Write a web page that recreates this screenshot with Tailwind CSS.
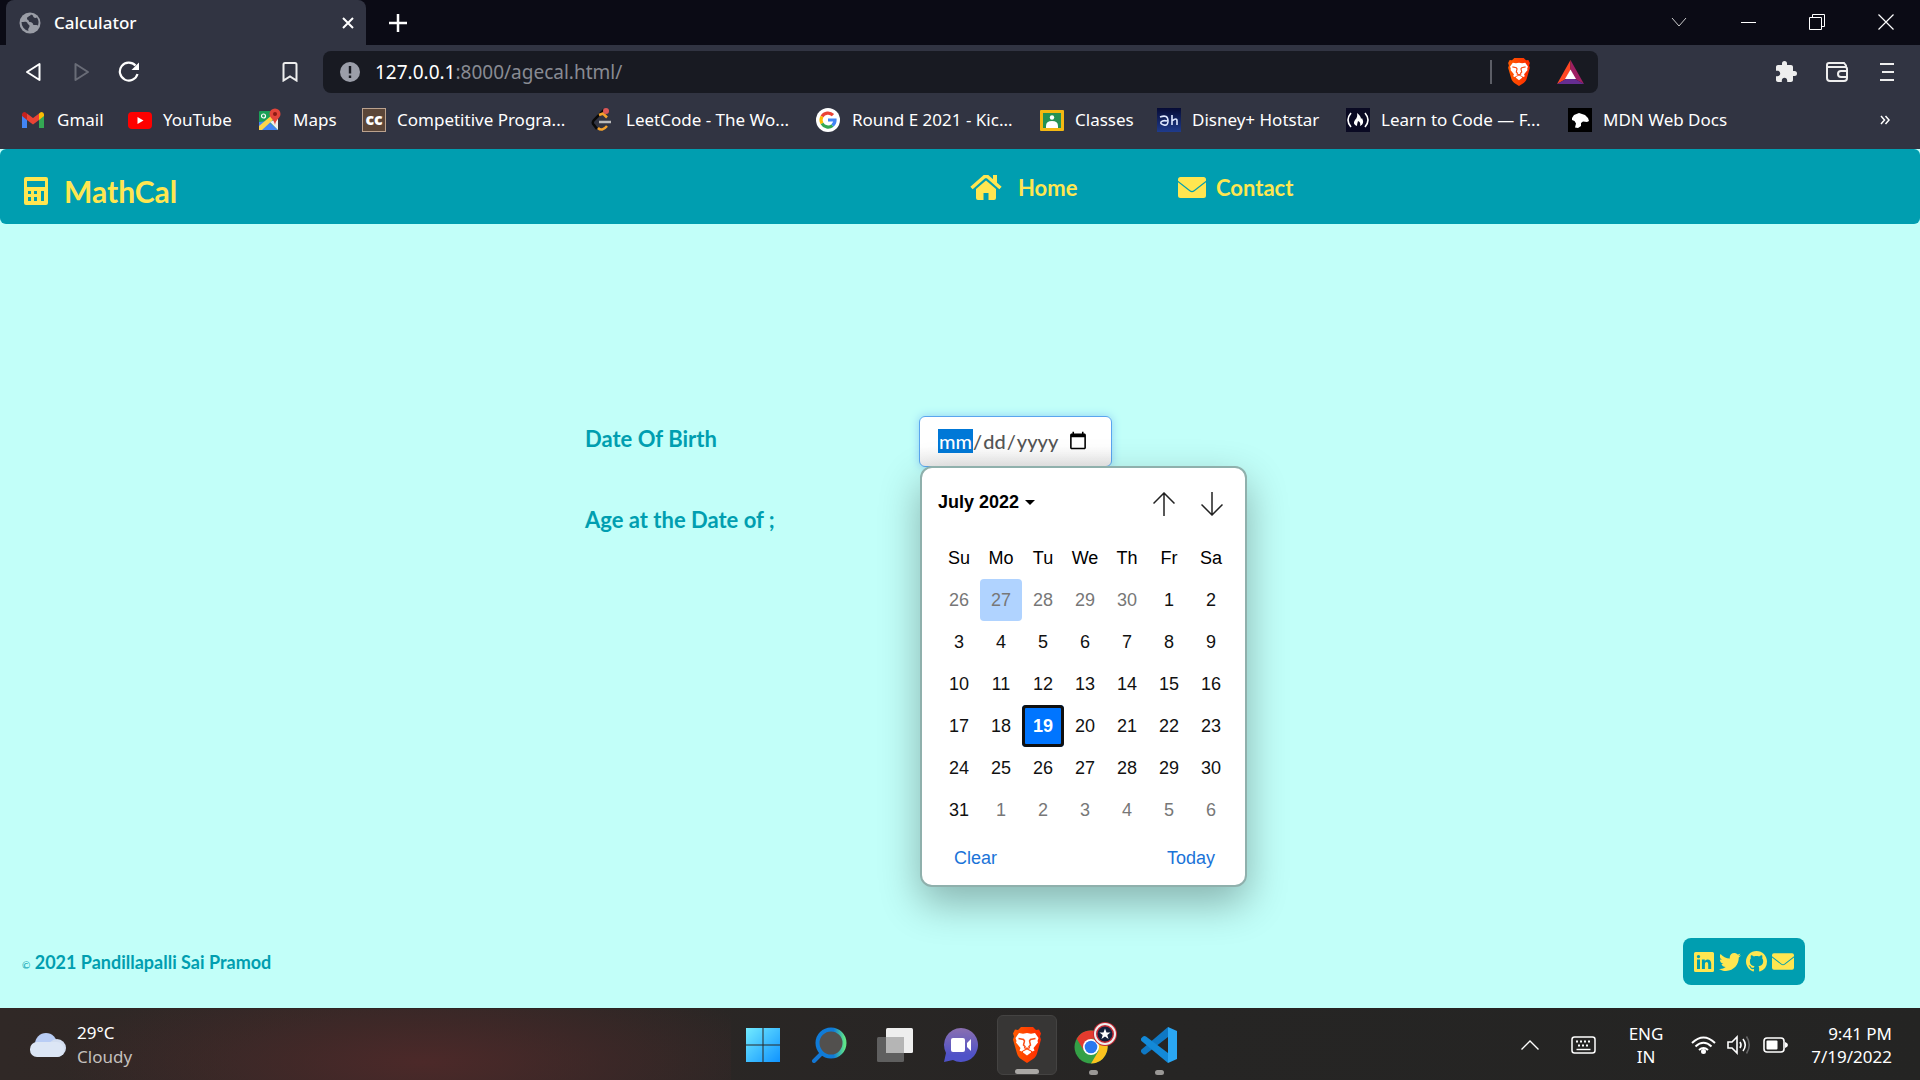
<!DOCTYPE html>
<html lang="en">
<head>
<meta charset="utf-8">
<title>Calculator</title>
<script src="https://cdn.jsdelivr.net/npm/@tailwindcss/browser@4"></script>
</head>
<body class="flex min-h-screen flex-col overflow-x-hidden bg-[#c2fff9] font-['Noto_Sans','Open_Sans',sans-serif]">

<!-- symbols shared by several places -->
<svg class="absolute size-0" aria-hidden="true">
  <linearGradient id="lion"><stop offset="0" stop-color="#ff5a00"/><stop offset="1" stop-color="#ff2a00"/></linearGradient>
  <symbol id="brave" viewBox="0 0 30 36">
    <path d="M9 0h12l3 3 3-.5 2 4-1 3 1 3-4 14c-1 3-2 4-4 5.500l-6 4-6-4c-2-1.500-3-2.500-4-5.500L1 12.500l1-3-1-3 2-4L6 3z" fill="url(#lion)"/>
    <path d="M7 6l4 .8 4-.8 4 .8 4-.8 3.500 5-1 3 .5 1.500-4.500 5.500 1 2.500-2 1-3-2-2.500-1-2.500 1-3 2-2-1 1-2.500L4 15.500l.5-1.500-1-3z" fill="#fff"/>
    <path d="M11 24.500l4-2 4 2v1l-4 3-4-3z" fill="#fff"/>
    <path d="M6.500 11.500l5 1 1 1.500-1 4 2 2M23.500 11.500l-5 1-1 1.500 1 4-2 2M12 20.500l3 1 3-1" fill="none" stroke="#fb4c15" stroke-width="1.500"/>
  </symbol>
  <symbol id="mail" viewBox="0 0 28 21">
    <path d="M2.500 0h23A2.500 2.500 0 0 1 28 2.500v1.300l-12.200 9.500q-1.800 1.400-3.600 0L0 3.800V2.500A2.500 2.500 0 0 1 2.500 0zM0 5.300l11.500 9q2.500 1.800 5 0L28 5.300v13.200a2.500 2.500 0 0 1-2.500 2.500h-23A2.500 2.500 0 0 1 0 18.500z" fill="currentColor"/>
  </symbol>
</svg>

<!-- tab strip -->
<div class="flex h-[45px] items-stretch bg-[#0b0b15] pl-[6px] text-white">
  <div class="flex w-[360px] items-center rounded-t-lg bg-[#313442] pr-[9px] pl-[13px]">
    <svg class="size-[22px]" viewBox="0 0 22 22"><circle cx="11" cy="11" r="10.500" fill="#9a9da6"/><path d="M12 2.500c-1 2-4 2-4 4s2 1 2 3c0 1 4 0 4 3 1 1 3 0 5 1a9 9 0 0 0-1-8c-2 1-4 0-4-2zM2.500 10c2 0 5-1 6 1 0 2 2 1 2 3s-2 2-1 5a9 9 0 0 1-7-9z" fill="#313442"/></svg>
    <span class="ml-[13px] text-[17px] leading-6 font-medium">Calculator</span>
    <button class="ml-auto p-[3px]" aria-label="Close tab"><svg class="size-3" viewBox="0 0 12 12"><path d="M1 1l10 10M11 1L1 11" stroke="#fff" stroke-width="2"/></svg></button>
  </div>
  <button class="ml-[20px] px-[3px]" aria-label="New tab"><svg class="size-[18px]" viewBox="0 0 18 18"><path d="M9 0v18M0 9h18" stroke="#fff" stroke-width="2.500"/></svg></button>
  <div class="ml-auto flex items-center pb-px">
    <button class="flex w-[69px] justify-center" aria-label="Search tabs"><svg class="size-4" viewBox="0 0 16 16"><path d="M1 4l7 8 7-8" fill="none" stroke="#ccc"/></svg></button>
    <button class="flex w-[69px] justify-center" aria-label="Minimize"><svg class="size-4" viewBox="0 0 16 16"><path d="M1 8.500h15" stroke="#fff"/></svg></button>
    <button class="flex w-[69px] justify-center" aria-label="Restore"><svg class="size-4" viewBox="0 0 16 16"><path d="M.5 3.500h12v12H.5zM3.500 3V.5h12v12H13" fill="none" stroke="#fff"/></svg></button>
    <button class="flex w-[69px] justify-center" aria-label="Close"><svg class="size-4" viewBox="0 0 16 16"><path d="M.5.5l15 15M15.500.5l-15 15" stroke="#fff" stroke-width="1.200"/></svg></button>
  </div>
</div>

<!-- toolbar -->
<div class="flex h-[54px] items-center bg-[#313442] pr-[25px] pl-[24px] text-[#eee]">
  <button class="mr-[28px]" aria-label="Back"><svg class="size-5" viewBox="0 0 20 20"><path d="M15.500 2v16L3 10z" fill="none" stroke="#fff" stroke-width="2" stroke-linejoin="round"/></svg></button>
  <button class="mr-[26px]" aria-label="Forward"><svg class="size-5" viewBox="0 0 20 20"><path d="M3.500 2v16L16 10z" fill="none" stroke="#696c77" stroke-width="2" stroke-linejoin="round"/></svg></button>
  <button class="mr-[142px]" aria-label="Reload"><svg class="size-[22px]" viewBox="0 0 22 22"><path d="M17.500 4.500A9 9 0 1 0 19.500 13" fill="none" stroke="#fff" stroke-width="2.200"/><path d="M21 1.500v7.500h-7.500z" fill="#fff"/></svg></button>
  <button class="mr-[25px]" aria-label="Bookmark"><svg class="h-5 w-4" viewBox="0 0 16 20"><path d="M1.500 2.500q0-1.500 1.500-1.500h10q1.500 0 1.500 1.500V18.500L8 14.500l-6.500 4z" fill="none" stroke="#eee" stroke-width="2"/></svg></button>
  <div class="flex h-[42px] w-[1275px] items-center rounded-lg bg-[#181a22] pr-[14px] pl-[17px]">
    <svg class="size-5" viewBox="0 0 20 20"><circle cx="10" cy="10" r="10" fill="#9b9ea9"/><path d="M10 4v7.500M10 13.500V16" stroke="#181a22" stroke-width="2.400"/></svg>
    <span class="ml-[15px] text-[19px] leading-7 text-[#888b93]"><span class="text-white">127.0.0.1</span>:8000/agecal.html/</span>
    <span class="ml-auto h-6 w-[2px] bg-[#5c5e66]"></span>
    <svg class="ml-[15px] h-7 w-6"><use href="#brave"/></svg>
    <svg class="ml-[26px] h-6 w-[27px]" viewBox="0 0 27 24"><path d="M13.500 0L0 24l9-5 4.500-9z" fill="#ff4724"/><path d="M13.500 0L27 24l-9-5-4.500-9z" fill="#9e1f63"/><path d="M0 24h27l-9-5H9z" fill="#662d91"/><path d="M13.500 9.500L19 19H8z" fill="#fff"/></svg>
  </div>
  <button class="ml-auto" aria-label="Extensions"><svg class="size-6" viewBox="0 0 24 24"><path d="M20.500 11H19V7c0-1.100-.9-2-2-2h-4V3.500a2.500 2.500 0 0 0-5 0V5H4c-1.100 0-2 .9-2 2v3.800h1.500c1.490 0 2.700 1.210 2.700 2.700s-1.210 2.700-2.700 2.700H2V20c0 1.100.9 2 2 2h3.800v-1.500c0-1.490 1.210-2.700 2.700-2.700s2.700 1.210 2.700 2.700V22H17c1.100 0 2-.9 2-2v-4h1.500a2.500 2.500 0 0 0 0-5z" fill="#eee"/></svg></button>
  <button class="ml-[27px]" aria-label="Wallet"><svg class="size-6" viewBox="0 0 24 24"><path d="M21 7V5.500L19 3H4Q2 3 2 5v13q0 3 3 3h14q3 0 3-3V9q0-2-2-2H2M22 11h-6q-3 0-3 3t3 3h6" fill="none" stroke="#eee" stroke-width="2"/></svg></button>
  <button class="ml-[30px]" aria-label="Menu"><svg class="h-5 w-4" viewBox="0 0 16 20"><path d="M1 2h14M3 10h12M1 18h14" stroke="#eee" stroke-width="2.200"/></svg></button>
</div>

<!-- bookmarks -->
<nav class="flex h-[50px] items-center bg-[#313442] pr-[30px] pb-[8px] pl-[21px] text-[17px] leading-6 whitespace-nowrap text-white">
  <a href="#" class="flex w-[107px] items-center gap-3"><svg class="size-6" viewBox="0 0 24 24"><path d="M1 6v14h5V10z" fill="#4285f4"/><path d="M23 6v14h-5V10z" fill="#34a853"/><path d="M18 5.500l2-1.500q3 0 3 3v1l-5 4z" fill="#fbbc04"/><path d="M1 7q0-3 3-3l2 1.500V12L1 8z" fill="#c5221f"/><path d="M6 5.500l6 4.500 6-4.500V12l-6 4.500L6 12z" fill="#ea4335"/></svg>Gmail</a>
  <a href="#" class="flex w-[130px] items-center gap-[11px]"><svg class="size-6" viewBox="0 0 24 24"><rect y="4" width="24" height="17" rx="4" fill="#f00"/><path d="M9.500 9v7l6-3.500z" fill="#fff"/></svg>YouTube</a>
  <a href="#" class="flex w-[104px] items-center gap-[11px]"><svg class="size-6" viewBox="0 0 24 24"><rect x="1" y="3" width="19" height="19" rx="1" fill="#1a9f57"/><path d="M1 22V14l9-1 10 9z" fill="#4285f4"/><path d="M1 22V18L14 7l3 3L4 22z" fill="#fdd54a"/><path d="M20 10v12L12 14z" fill="#eee"/><circle cx="5.500" cy="8" r="2" fill="none" stroke="#fff" stroke-width="1.200"/><path d="M11.500 6a5.500 5.500 0 0 1 11 0c0 4-4.500 5-5.500 11-1-6-5.500-7-5.500-11z" fill="#e2453a"/><circle cx="17" cy="6" r="2" fill="#8c1b14"/></svg>Maps</a>
  <a href="#" class="flex w-[228px] items-center gap-[11px]"><span class="flex size-6 items-center justify-center border border-[#bba28e] bg-[#5b4638] pb-[2px] text-base font-black text-white">cc</span>Competitive Progra...</a>
  <a href="#" class="flex w-[226px] items-center gap-3"><svg class="size-6" viewBox="0 0 24 24"><path d="M14 2L4 12q-2.500 3 0 5l3 4" fill="none" stroke="#090909" stroke-width="2.500"/><path d="M9 7l4-1.500 4 4M8 20q4 4 9-2" fill="none" stroke="#f5a22b" stroke-width="2.500"/><path d="M9 14h12" stroke="#bbb" stroke-width="2.500"/><circle cx="16" cy="3" r="3" fill="#dc5757"/></svg>LeetCode - The Wo...</a>
  <a href="#" class="flex w-[224px] items-center gap-3"><svg class="size-6" viewBox="0 0 24 24"><circle cx="12" cy="12" r="12" fill="#fff"/><g fill="none" stroke-width="3.200"><path d="M17 7.200A7 7 0 0 0 6 8.500" stroke="#ea4335"/><path d="M6 8.500a7 7 0 0 0 0 7" stroke="#fbbc05"/><path d="M6 15.500a7 7 0 0 0 10.500 2" stroke="#34a853"/><path d="M12 12h7a7 7 0 0 1-2.500 5.500" stroke="#4285f4"/></g></svg>Round E 2021 - Kic...</a>
  <a href="#" class="flex w-[117px] items-center gap-[11px]"><svg class="size-6" viewBox="0 0 24 24"><rect y="2" width="24" height="21" rx="1" fill="#f4b812"/><rect x="3" y="5" width="18" height="15" fill="#259153"/><circle cx="12" cy="9.500" r="2.200" fill="#fff"/><path d="M6 18q0-5 6-5t6 5v2H6z" fill="#fff"/></svg>Classes</a>
  <a href="#" class="flex w-[189px] items-center gap-[11px]"><svg class="size-6" viewBox="0 0 24 24"><rect width="24" height="24" fill="url(#dis)"/><path d="M3 9q8-3 8 4 0 5-4 4-4-1-3-3 2-2 6-1M15 7v10M15 13q5-4 5 0v4" fill="none" stroke="#dfe8ff" stroke-width="1.600"/><linearGradient id="dis" x2="0" y2="1"><stop stop-color="#060b35"/><stop offset="1" stop-color="#1f3b8c"/></linearGradient></svg>Disney+ Hotstar</a>
  <a href="#" class="flex w-[222px] items-center gap-[11px]"><svg class="size-6" viewBox="0 0 24 24"><rect width="24" height="24" fill="#0a0a23"/><path d="M5 5q-6 7 0 14M19 5q6 7 0 14" fill="none" stroke="#fff" stroke-width="1.600"/><path d="M11 5q4 3 4 6l1-1q3 6-2 8 1-4-2-5-1 3-1 5-5-2-2-6 3-3 2-7z" fill="#fff"/></svg>Learn to Code — F...</a>
  <a href="#" class="flex items-center gap-[11px]"><svg class="size-6" viewBox="0 0 24 24"><rect width="24" height="24" fill="#000"/><path d="M4 10l2-3 5-2 6 2 3 3 1 3-2 1-4-.5-2 1.500v3l-3 2-3-.5 1-4-1.500-2.500L4 12z" fill="#fff"/></svg>MDN Web Docs</a>
  <button class="ml-auto" aria-label="More bookmarks"><svg class="size-[10px]" viewBox="0 0 10 10"><path d="M1 1l3.500 4L1 9M5.500 1L9 5 5.500 9" fill="none" stroke="#fff" stroke-width="1.500"/></svg></button>
</nav>

<!-- web page -->
<main class="flex flex-1 flex-col font-['Lato',sans-serif]">
  <header class="flex h-[75px] items-center rounded-md bg-[#009eb0] pl-6 font-bold text-[#ffe650]">
    <a href="#" class="flex w-[946px] items-center gap-4 pt-[8px] text-[30px] leading-8">
      <svg class="h-7 w-6" viewBox="0 0 24 28"><path fill-rule="evenodd" d="M2 0h20q2 0 2 2v24q0 2-2 2H2q-2 0-2-2V2q0-2 2-2zM3 4v6h18V4zM4 14v3h3v-3zM10 14v3h3v-3zM17 14v10h3V14zM4 20v4h3v-4zM10 20v4h3v-4z" fill="currentColor"/></svg>MathCal</a>
    <a href="#" class="flex w-[208px] items-center gap-4 pt-[2px] text-[22px] leading-8">
      <svg class="h-[25px] w-8" viewBox="0 0 32 25"><path d="M16 5.500l10 8.500v9q0 2-2 2h-5.500v-7h-5v7H8q-2 0-2-2v-9z" fill="currentColor"/><path d="M1.500 13L14 2q2-1.500 4 0l12.500 11" fill="none" stroke="#009eb0" stroke-width="6"/><path d="M1.500 13L14 2q2-1.500 4 0l12.500 11" fill="none" stroke="currentColor" stroke-width="3.500"/><path d="M23 0h4v10l-4-3.500z" fill="currentColor"/></svg>Home</a>
    <a href="#" class="flex items-center gap-[10px] pt-[2px] text-[22px] leading-8"><svg class="h-[21px] w-7"><use href="#mail"/></svg>Contact</a>
  </header>

  <form class="mx-auto mt-[192px] grid w-[750px] grid-cols-[334px_1fr] items-start text-[22px] font-bold text-[#009eb0]">
    <label for="dob" class="pt-[7px] leading-8">Date Of Birth</label>
    <div class="relative h-[81px]">
      <input id="dob" type="date" class="h-[51px] w-[193px] rounded-md border border-[#5aa5ee] bg-linear-to-b from-white from-60% to-[#ebebeb] pr-[21px] pb-[2px] pl-[18px] text-xl font-medium text-[#555] shadow-[0_0_10px_#8fd0f5] outline-none [&::-webkit-datetime-edit-fields-wrapper]:p-0 [&::-webkit-datetime-edit-month-field]:rounded-none [&::-webkit-datetime-edit-month-field]:bg-[#0078d7] [&::-webkit-datetime-edit-month-field]:text-white">
      <section class="absolute top-[50px] left-px z-10 w-[327px] rounded-xl border-2 border-[#8fb0ac] bg-white pr-[15px] pl-4 pt-[13px] font-['Liberation_Sans',sans-serif] text-lg font-normal text-black shadow-[0_16px_40px_rgba(0,0,0,0.3)]">
        <div class="flex h-[44px] items-center justify-between">
          <button type="button" class="flex items-center gap-[6px] pb-[2px] font-bold">July 2022 <svg class="h-[5px] w-[10px]" viewBox="0 0 10 5"><path d="M0 0h10L5 5z"/></svg></button>
          <div class="flex gap-[26px] pt-px pr-[7px]">
            <button type="button" aria-label="Previous month"><svg class="h-6 w-[22px]" viewBox="0 0 22 24" fill="none" stroke="#222" stroke-width="1.500"><path d="M11 24V1M.5 11.500L11 1l10.500 10.500"/></svg></button>
            <button type="button" aria-label="Next month"><svg class="h-6 w-[22px]" viewBox="0 0 22 24" fill="none" stroke="#222" stroke-width="1.500"><path d="M11 0v23M.5 12.500L11 23l10.500-10.500"/></svg></button>
          </div>
        </div>
        <table class="mt-[11px] w-[294px] table-fixed text-center [&_td]:h-[42px] [&_th]:h-[43px] [&_th]:font-normal">
          <thead><tr><th>Su</th><th>Mo</th><th>Tu</th><th>We</th><th>Th</th><th>Fr</th><th>Sa</th></tr></thead>
          <tbody class="text-[#111]">
            <tr><td class="text-[#777]">26</td><td class="rounded-sm bg-[#b0d3ff] text-[#777]">27</td><td class="text-[#777]">28</td><td class="text-[#777]">29</td><td class="text-[#777]">30</td><td>1</td><td>2</td></tr>
            <tr><td>3</td><td>4</td><td>5</td><td>6</td><td>7</td><td>8</td><td>9</td></tr>
            <tr><td>10</td><td>11</td><td>12</td><td>13</td><td>14</td><td>15</td><td>16</td></tr>
            <tr><td>17</td><td>18</td><td class="rounded-sm bg-[#0075ff] font-bold text-white inset-ring-3 inset-ring-[#101010]">19</td><td>20</td><td>21</td><td>22</td><td>23</td></tr>
            <tr><td>24</td><td>25</td><td>26</td><td>27</td><td>28</td><td>29</td><td>30</td></tr>
            <tr><td>31</td><td class="text-[#777]">1</td><td class="text-[#777]">2</td><td class="text-[#777]">3</td><td class="text-[#777]">4</td><td class="text-[#777]">5</td><td class="text-[#777]">6</td></tr>
          </tbody>
        </table>
        <div class="flex h-[54px] items-center justify-between pr-[15px] pb-px pl-[16px] text-[#1a73d8]">
          <button type="button">Clear</button><button type="button">Today</button>
        </div>
      </section>
    </div>
    <span class="pt-[7px] leading-8">Age at the Date of ;</span>
  </form>

  <footer class="mt-auto flex items-center justify-between pr-[115px] pb-[23px] pl-[22px]">
    <p class="text-lg font-bold text-[#009eb0]"><span class="text-[10px] font-normal">©</span> 2021 Pandillapalli Sai Pramod</p>
    <div class="flex h-[47px] items-center gap-[5px] rounded-lg bg-[#009eb0] px-[11px] text-[#ffe650]">
      <a href="#" aria-label="LinkedIn"><svg class="size-5" viewBox="0 0 20 20"><path fill-rule="evenodd" d="M1.500 0h17Q20 0 20 1.500v17q0 1.500-1.500 1.500h-17Q0 20 0 18.500v-17Q0 0 1.500 0zM3 7.600v9.500h3V7.600zM4.500 2.900a1.700 1.700 0 1 0 0 3.400 1.700 1.700 0 0 0 0-3.400zM7.900 7.600v9.500h3v-4.700c0-3 3.300-3.300 3.300 0v4.700h3v-5.300c0-5-4.500-5.300-6.400-2.900V7.600z" fill="currentColor"/></svg></a>
      <a href="#" aria-label="Twitter"><svg class="size-[22px]" viewBox="0 0 512 512"><path d="M459.370 151.716c.325 4.548.325 9.097.325 13.645 0 138.720-105.583 298.558-298.558 298.558-59.452 0-114.680-17.219-161.137-47.106 8.447.974 16.568 1.299 25.340 1.299 49.055 0 94.213-16.568 130.274-44.832-46.132-.975-84.792-31.188-98.112-72.772 6.498.974 12.995 1.624 19.818 1.624 9.421 0 18.843-1.300 27.614-3.573-48.081-9.747-84.143-51.980-84.143-102.985v-1.299c13.969 7.797 30.214 12.670 47.431 13.319-28.264-18.843-46.781-51.005-46.781-87.391 0-19.492 5.197-37.360 14.294-52.954 51.655 63.675 129.300 105.258 216.365 109.807-1.624-7.797-2.599-15.918-2.599-24.040 0-57.828 46.782-104.934 104.934-104.934 30.213 0 57.502 12.670 76.670 33.137 23.715-4.548 46.456-13.320 66.599-25.340-7.798 24.366-24.366 44.833-46.132 57.827 21.117-2.273 41.584-8.122 60.426-16.243-14.292 20.791-32.161 39.308-52.628 54.253z" fill="currentColor"/></svg></a>
      <a href="#" aria-label="GitHub"><svg class="size-[21px]" viewBox="0 0 16 16"><path d="M8 0C3.580 0 0 3.580 0 8c0 3.540 2.290 6.530 5.470 7.590.4.070.55-.17.55-.38 0-.19-.01-.82-.01-1.490-2.010.37-2.530-.49-2.690-.94-.09-.23-.48-.94-.82-1.130-.28-.15-.68-.52-.01-.53.63-.01 1.080.58 1.230.82.72 1.210 1.870.87 2.330.66.070-.52.28-.87.51-1.070-1.780-.2-3.640-.89-3.640-3.950 0-.87.31-1.590.82-2.150-.08-.2-.36-1.020.08-2.120 0 0 .67-.21 2.200.82.64-.18 1.320-.27 2-.27s1.360.09 2 .27c1.530-1.040 2.200-.82 2.200-.82.44 1.100.16 1.920.08 2.120.51.56.82 1.270.82 2.150 0 3.070-1.870 3.750-3.650 3.950.29.25.54.73.54 1.480v2.200c0 .21.15.46.55.38A8 8 0 0 0 16 8c0-4.420-3.580-8-8-8z" fill="currentColor"/></svg></a>
      <a href="#" aria-label="Email"><svg class="h-[17px] w-[22px]"><use href="#mail"/></svg></a>
    </div>
  </footer>
</main>

<!-- taskbar -->
<div class="grid h-[72px] grid-cols-[1fr_auto_1fr] items-center bg-linear-to-r from-[#302826] via-[#262524] via-60% to-[#242423] pt-px text-white">
  <div class="flex h-full items-center gap-[11px] bg-radial-[ellipse_50%_130%_at_58%_75%] from-[#4c2929] to-transparent pl-[29px]">
    <svg class="h-6 w-[37px]" viewBox="0 0 37 24"><circle cx="17" cy="11" r="11" fill="#b9cdf5"/><circle cx="28" cy="15" r="9" fill="#d3def0"/><rect x="1" y="9" width="34" height="15" rx="7" fill="#dce6f5"/></svg>
    <div class="text-[17px] leading-6"><p>29°C</p><p class="text-[#c4c0be]">Cloudy</p></div>
  </div>
  <div class="flex items-center gap-[6px] pl-[2px] [&>button]:relative [&>button]:flex [&>button]:size-[60px] [&>button]:items-center [&>button]:justify-center">
    <button aria-label="Start"><svg class="size-9" viewBox="0 0 36 36"><g fill="url(#win)"><path d="M1 1h16.500v16.500H1zM18.500 1H35v16.500H18.500zM1 18.500h16.500V35H1zM18.500 18.500H35V35H18.500z"/></g><linearGradient id="win" x2="1" y2="1"><stop stop-color="#72ebff"/><stop offset="1" stop-color="#0f93ff"/></linearGradient></svg></button>
    <button aria-label="Search"><svg class="size-9" viewBox="0 0 36 36"><path d="M3 34L12 25" stroke="#1377d4" stroke-width="4" stroke-linecap="round"/><circle cx="20" cy="16" r="13.500" fill="#52504e" stroke="url(#sr)" stroke-width="4"/><linearGradient id="sr"><stop offset=".6" stop-color="#0f7bd8"/><stop offset="1" stop-color="#5fe588"/></linearGradient></svg></button>
    <button aria-label="Task view"><svg class="size-9" viewBox="0 0 36 36"><rect y="10" width="27" height="25" rx="1.500" fill="#5f5f5f"/><rect x="9" y="1" width="27" height="25" rx="1.500" fill="#eee"/><path d="M9 10h18v16H9z" fill="#b5b5b5"/></svg></button>
    <button aria-label="Chat"><svg class="size-9" viewBox="0 0 36 36"><path d="M18 1a17 17 0 1 1-8 32l-9 2 2-9A17 17 0 0 1 18 1z" fill="url(#ch)"/><rect x="8" y="11" width="14" height="14" rx="2" fill="#fff"/><path d="M24 16l4-4v12l-4-4z" fill="#fff"/><linearGradient id="ch" x2="0" y2="1"><stop stop-color="#8a6fb0"/><stop offset=".8" stop-color="#4f52c8"/></linearGradient></svg></button>
    <button aria-label="Brave" class="rounded-md border border-[#444342] bg-[#373635]"><svg class="h-9 w-[30px]"><use href="#brave"/></svg><span class="absolute bottom-0 h-[5px] w-6 rounded-full bg-[#aaa8a5]"></span></button>
    <button aria-label="Chrome"><svg class="size-12" viewBox="0 0 48 48"><circle cx="22" cy="26" r="16.500" fill="#34a046"/><path d="M7.700 17.700A16.500 16.500 0 0 1 36.300 17.700H22v8l-7 4z" fill="#e33b2e"/><path d="M36.300 17.700A16.500 16.500 0 0 1 22 42.500L29.500 30 28 17.700z" fill="#fcc31e"/><circle cx="22" cy="26" r="8" fill="#fff"/><circle cx="22" cy="26" r="6.300" fill="#2a77ee"/><circle cx="36" cy="13" r="12" fill="#c52b35"/><circle cx="36" cy="13" r="10" fill="none" stroke="#eee" stroke-width="2"/><circle cx="36" cy="13" r="7.500" fill="#14203a"/><path d="M36 7.500l1.500 4h4l-3.200 2.500 1.200 4-3.500-2.500-3.500 2.500 1.200-4-3.200-2.500h4z" fill="#fff"/></svg><span class="absolute bottom-0 h-[5px] w-[9px] rounded-full bg-[#9a9896]"></span></button>
    <button aria-label="Visual Studio Code"><svg class="size-9" viewBox="0 0 36 36"><path d="M27 0v10L5 27q-1.500 1-3 0L.5 25.500q-1.500-1.500 0-3z" fill="#0f78c4"/><path d="M27 36V26L5 9.500q-1.500-1-3 0L.5 11q-1.500 1.500 0 3z" fill="#1389d8"/><path d="M27 0l9 4v28l-9 4z" fill="#2aa7f4"/></svg><span class="absolute bottom-0 h-[5px] w-[9px] rounded-full bg-[#9a9896]"></span></button>
  </div>
  <div class="flex items-center justify-end pr-[28px] text-center text-[17px] leading-[23px]">
    <button aria-label="Hidden icons"><svg class="h-[10px] w-[18px]" viewBox="0 0 18 10"><path d="M.5 9.500L9 1l8.500 8.500" fill="none" stroke="#fff" stroke-width="1.400"/></svg></button>
    <svg class="ml-[32px] h-[18px] w-[25px]" viewBox="0 0 25 18"><rect x="1" y="1" width="23" height="16" rx="2.500" fill="none" stroke="#fff" stroke-width="1.500"/><path d="M5 5.500h16M7 9.500h12" stroke="#fff" stroke-width="1.800" stroke-dasharray="2 2"/><path d="M5.500 13.500h14" stroke="#fff" stroke-width="1.400"/></svg>
    <div class="ml-[32px] w-[36px]"><p>ENG</p><p>IN</p></div>
    <svg class="ml-[27px] h-[18px] w-[25px]" viewBox="0 0 25 18" fill="none" stroke="#fff" stroke-width="2"><path d="M1 7q11.500-11 23 0M4.500 10.500q8-7.500 16 0M8 14q4.500-4 9 0"/><circle cx="12.500" cy="15.500" r="1.500" fill="#fff"/></svg>
    <svg class="ml-[11px] h-[20px] w-[25px]" viewBox="0 0 25 20" fill="none" stroke="#fff" stroke-width="1.600"><path d="M1 7h4l5-5v16l-5-5H1zM13 7q2 3 0 6M16 4q4.500 6 0 12"/><path d="M19.500 1.500q5.500 8.500 0 17" stroke="#666"/></svg>
    <svg class="ml-[11px] h-[16px] w-[25px]" viewBox="0 0 25 16"><rect x="1" y="1" width="20" height="14" rx="3" fill="none" stroke="#fff" stroke-width="1.600"/><rect x="3.500" y="3.500" width="11" height="9" rx="1" fill="#fff"/><path d="M22 5q3 1 3 3t-3 3z" fill="#fff"/></svg>
    <div class="ml-[22px] w-[82px] text-right whitespace-nowrap"><p>9:41 PM</p><p>7/19/2022</p></div>
  </div>
</div>
</body>
</html>
